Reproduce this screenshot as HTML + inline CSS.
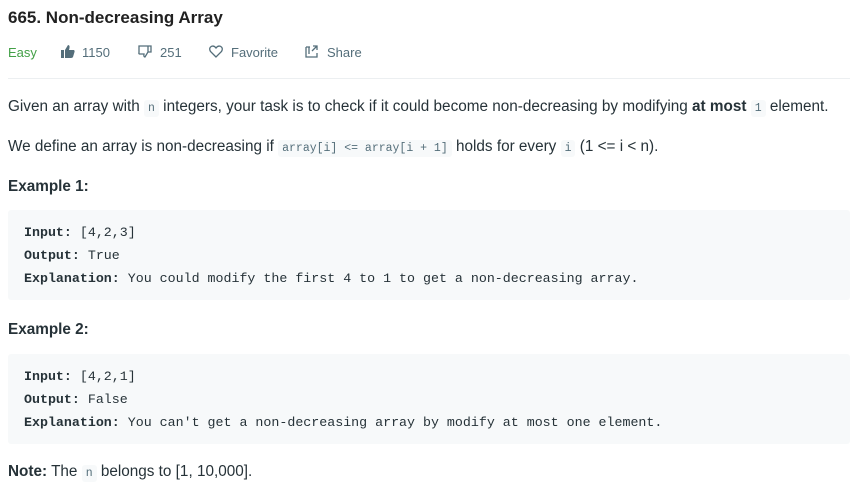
<!DOCTYPE html>
<html><head><meta charset="utf-8"><style>
body{margin:0;width:851px;height:499px;background:#fff;font-family:"Liberation Sans",sans-serif;color:#263238;position:relative;overflow:hidden}
.a{position:absolute;white-space:nowrap}
code{font-family:"Liberation Mono",monospace;font-size:11.5px;background:#f7f9fa;color:#546e7a;padding:2px 4px;border-radius:3px}
.pre{position:absolute;left:8px;width:842px;background:#f7f9fa;border-radius:3px;font-family:"Liberation Mono",monospace;font-size:13.3px;color:#263238}
.pre div{position:absolute;left:16px;white-space:nowrap}
.t{font-size:15.3px}
.meta{font-size:13px;color:#546e7a}
</style></head><body>
<div class="a" style="left:8px;top:8px;font-size:17px;font-weight:bold;color:#212121">665. Non-decreasing Array</div>
<div class="a meta" style="left:8px;top:45px;color:#43a047">Easy</div>
<svg class="a" style="left:61px;top:45px" width="14" height="13" viewBox="0 0 14 13"><rect x="0" y="5" width="3" height="8" fill="#546e7a"/><path d="M4 5 L7 0 Q9 0 8.5 3 L8 5 H13 Q14 6 13.5 7 L12 12 Q11.5 13 10 13 H4Z" fill="#546e7a"/></svg>
<div class="a meta" style="left:82px;top:45px">1150</div>
<svg class="a" style="left:138px;top:45px" width="14" height="13" viewBox="0 0 14 13"><path d="M1 1 H10 V7 L7 12 Q5.5 12 6 9 H1.5 Q0.5 8.5 1 7.5Z M10 1 H13 V7 H10" fill="none" stroke="#546e7a" stroke-width="1.3"/></svg>
<div class="a meta" style="left:160px;top:45px">251</div>
<svg class="a" style="left:209px;top:45px" width="14" height="13" viewBox="0 0 14 13"><path d="M7 12 L1.5 6.5 Q-0.5 3 2.5 1.3 Q5 0.3 7 3 Q9 0.3 11.5 1.3 Q14.5 3 12.5 6.5Z" fill="none" stroke="#546e7a" stroke-width="1.3"/></svg>
<div class="a meta" style="left:231px;top:45px">Favorite</div>
<svg class="a" style="left:305px;top:45px" width="14" height="13" viewBox="0 0 14 13"><path d="M1 2 V12 H12 V8 M1 2 H5 M4 2 V9 M8 1 L12 1 L12 5 M12 1 L7 6" fill="none" stroke="#546e7a" stroke-width="1.3"/></svg>
<div class="a meta" style="left:327px;top:45px">Share</div>
<div class="a" style="left:8px;top:78px;width:842px;height:1px;background:#eceff1"></div>
<div class="a t" style="left:8px;top:98px">Given an array with <code>n</code> integers, your task is to check if it could become non-decreasing by modifying <b>at most</b> <code>1</code> element.</div>
<div class="a t" style="left:8px;top:138px">We define an array is non-decreasing if <code>array[i] &lt;= array[i + 1]</code> holds for every <code>i</code> (1 &lt;= i &lt; n).</div>
<div class="a t" style="left:8px;top:178px;font-weight:bold">Example 1:</div>
<div class="pre" style="top:210px;height:90px"><div style="top:15px"><b>Input:</b> [4,2,3]</div><div style="top:38px"><b>Output:</b> True</div><div style="top:61px"><b>Explanation:</b> You could modify the first 4 to 1 to get a non-decreasing array.</div></div>
<div class="a t" style="left:8px;top:321px;font-weight:bold">Example 2:</div>
<div class="pre" style="top:354px;height:90px"><div style="top:15px"><b>Input:</b> [4,2,1]</div><div style="top:38px"><b>Output:</b> False</div><div style="top:61px"><b>Explanation:</b> You can't get a non-decreasing array by modify at most one element.</div></div>
<div class="a t" style="left:8px;top:463px"><b>Note:</b> The <code>n</code> belongs to [1, 10,000].</div>
</body></html>
